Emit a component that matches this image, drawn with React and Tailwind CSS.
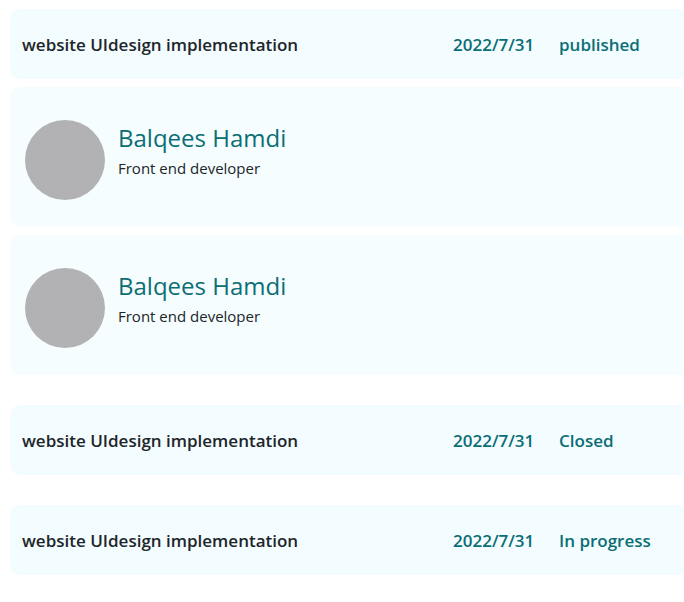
const font = "font-['Segoe_UI','Open_Sans','Noto_Sans',sans-serif]";

function TaskRow({ title, date, status }) {
  return (
    <div className="flex h-[70px] items-center rounded-l-[10px] bg-[#f3fcff] pt-px pl-3 text-[17px] leading-6 font-semibold text-[#0b6e75]">
      <h2 className="w-[431px] shrink-0 text-[#212529]">{title}</h2>
      <time className="w-[106px] shrink-0">{date}</time>
      <span className="whitespace-nowrap">{status}</span>
    </div>
  );
}

function Member({ name, role }) {
  return (
    <div className="flex h-[140px] gap-[13px] rounded-l-[10px] bg-[#f5fdff] pt-[33px] pl-[15px]">
      <div className="size-20 shrink-0 rounded-full bg-[#b2b2b4]" />
      <div>
        <h3 className="text-2xl leading-9 text-[#0b6e75]">{name}</h3>
        <p className="text-[15px] leading-6 text-[#212529]">{role}</p>
      </div>
    </div>
  );
}

export default function App() {
  return (
    <main className={`${font} overflow-hidden bg-white pt-[9px] pb-7 pl-[10px]`}>
      <TaskRow title="website UIdesign implementation" date="2022/7/31" status="published" />
      <div className="mt-2 mb-[30px] flex flex-col gap-2">
        <Member name="Balqees Hamdi" role="Front end developer" />
        <Member name="Balqees Hamdi" role="Front end developer" />
      </div>
      <div className="flex flex-col gap-[30px]">
        <TaskRow title="website UIdesign implementation" date="2022/7/31" status="Closed" />
        <TaskRow title="website UIdesign implementation" date="2022/7/31" status="In progress" />
      </div>
    </main>
  );
}
